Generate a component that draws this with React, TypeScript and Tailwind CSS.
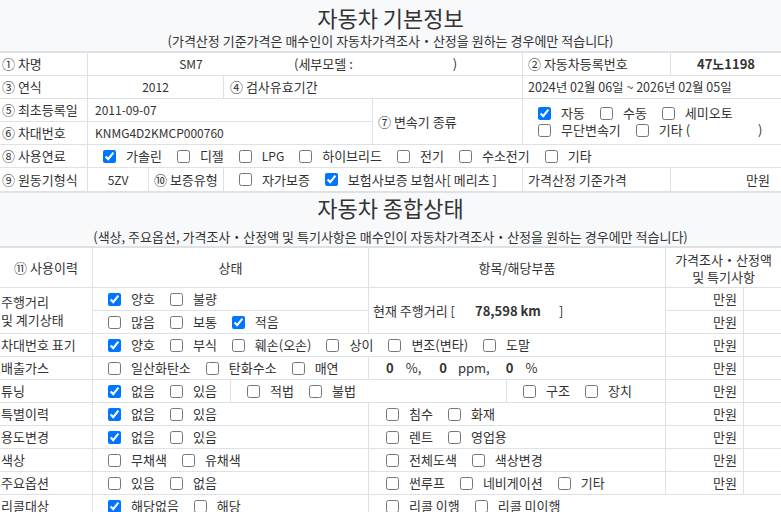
import React from 'react';

const Chk = ({ label, on }: { label: React.ReactNode; on?: boolean }) => (
  <span className="inline-flex items-center gap-[10px] mr-[15px] whitespace-nowrap">
    <input type="checkbox" defaultChecked={on} className="m-0 w-[13px] h-[13px] shrink-0" />
    <span>{label}</span>
  </span>
);

// 영문/숫자는 조금 작게
const L = ({ children }: { children: React.ReactNode }) => <span className="text-[12px]">{children}</span>;

const Row = ({ children, className = '' }: { children: React.ReactNode; className?: string }) => (
  <div className={`flex h-[23px] border-b border-[#dee2e6] ${className}`}>{children}</div>
);

const Cell = ({ children, className = '' }: { children?: React.ReactNode; className?: string }) => (
  <div className={`flex items-center h-full border-r border-[#dee2e6] whitespace-nowrap overflow-hidden ${className}`}>
    {children}
  </div>
);

const Won = () => (
  <>
    <Cell className="w-[78px] justify-end pr-[6px]">만원</Cell>
    <div className="flex-1 h-full" />
  </>
);

export default function App() {
  return (
    <div className="w-[781px] bg-white text-[13px] text-[#333] font-['Noto_Sans_CJK_KR','Liberation_Sans',sans-serif]">
      {/* 기본정보 */}
      <div className="h-[53px] bg-[#f8f9fa] border-b-2 border-[#dee2e6] flex flex-col items-center">
        <div className="text-[22px] leading-[28px] mt-[3px]">자동차 기본정보</div>
        <div className="leading-[16px] mt-[2px]">(가격산정 기준가격은 매수인이 자동차가격조사・산정을 원하는 경우에만 적습니다)</div>
      </div>

      <Row>
        <Cell className="w-[88px] pl-[2px]">① 차명</Cell>
        <Cell className="w-[435px]">
          <span className="w-[206px] text-center"><L>SM7</L></span>
          <span>(세부모델 :</span>
          <span className="ml-[100px]">)</span>
        </Cell>
        <Cell className="w-[148px] pl-[5px]">② 자동차등록번호</Cell>
        <div className="flex-1 flex items-center justify-center font-bold">47노1198</div>
      </Row>
      <Row>
        <Cell className="w-[88px] pl-[2px]">③ 연식</Cell>
        <Cell className="w-[136px] justify-center"><L>2012</L></Cell>
        <Cell className="w-[299px] pl-[6px]">④ 검사유효기간</Cell>
        <div className="flex-1 flex items-center pl-[5px] text-[12.5px]">2024년 02월 06일 ~ 2026년 02월 05일</div>
      </Row>
      <div className="flex h-[46px] border-b border-[#dee2e6]">
        <div className="flex flex-col w-[373px]">
          <div className="flex h-[23px] border-b border-[#dee2e6]">
            <Cell className="w-[88px] pl-[2px]">⑤ 최초등록일</Cell>
            <Cell className="flex-1 pl-[7px]"><L>2011-09-07</L></Cell>
          </div>
          <div className="flex flex-1">
            <Cell className="w-[88px] pl-[2px]">⑥ 차대번호</Cell>
            <Cell className="flex-1 pl-[7px]"><L>KNMG4D2KMCP000760</L></Cell>
          </div>
        </div>
        <Cell className="w-[150px] pl-[5px]">⑦ 변속기 종류</Cell>
        <div className="flex-1 flex flex-col justify-center pl-[15px]">
          <div className="flex items-center h-[17px]">
            <Chk label="자동" on />
            <Chk label="수동" />
            <Chk label="세미오토" />
          </div>
          <div className="flex items-center h-[17px]">
            <Chk label="무단변속기" />
            <span className="inline-flex items-center gap-[10px] whitespace-nowrap">
              <input type="checkbox" className="m-0 w-[13px] h-[13px]" />
              <span>기타 (</span>
              <span className="ml-[58px]">)</span>
            </span>
          </div>
        </div>
      </div>
      <Row>
        <Cell className="w-[88px] pl-[2px]">⑧ 사용연료</Cell>
        <div className="flex-1 flex items-center pl-[15px]">
          <Chk label="가솔린" on />
          <Chk label="디젤" />
          <Chk label={<L>LPG</L>} />
          <Chk label="하이브리드" />
          <Chk label="전기" />
          <Chk label="수소전기" />
          <Chk label="기타" />
        </div>
      </Row>
      <div className="flex h-[23px]">
        <Cell className="w-[88px] pl-[2px]">⑨ 원동기형식</Cell>
        <Cell className="w-[61px] justify-center"><L>5ZV</L></Cell>
        <Cell className="w-[75px] pl-[5px]">⑩ 보증유형</Cell>
        <Cell className="w-[299px] pl-[15px]">
          <Chk label="자가보증" />
          <span className="inline-flex items-center gap-[10px] whitespace-nowrap">
            <input type="checkbox" defaultChecked className="m-0 w-[13px] h-[13px]" />
            <span>보험사보증 보험사[ 메리츠 ]</span>
          </span>
        </Cell>
        <Cell className="w-[148px] pl-[5px]">가격산정 기준가격</Cell>
        <div className="flex-1 flex items-center justify-end pr-[11px]">만원</div>
      </div>

      {/* 종합상태 */}
      <div className="h-[57px] bg-[#f8f9fa] border-y-2 border-[#dee2e6] flex flex-col items-center">
        <div className="text-[22px] leading-[29px]">자동차 종합상태</div>
        <div className="leading-[16px] mt-[7px]">(색상, 주요옵션, 가격조사・산정액 및 특기사항은 매수인이 자동차가격조사・산정을 원하는 경우에만 적습니다)</div>
      </div>

      <div className="flex h-[40px] border-b border-[#dee2e6]">
        <Cell className="w-[93px] justify-center">⑪ 사용이력</Cell>
        <Cell className="w-[276px] justify-center">상태</Cell>
        <Cell className="w-[297px] justify-center">항목/해당부품</Cell>
        <div className="flex-1 flex flex-col items-center justify-center text-center">
          <div className="h-[17px] leading-[17px]">가격조사・산정액</div>
          <div className="h-[17px] leading-[17px]">및 특기사항</div>
        </div>
      </div>

      <div className="flex h-[46px] border-b border-[#dee2e6]">
        <Cell className="w-[93px] pl-[1px]">
          <div className="leading-[18px]">
            <div>주행거리</div>
            <div>및 계기상태</div>
          </div>
        </Cell>
        <div className="w-[276px] flex flex-col border-r border-[#dee2e6]">
          <div className="h-[23px] flex items-center pl-[15px] border-b border-[#dee2e6]">
            <Chk label="양호" on />
            <Chk label="불량" />
          </div>
          <div className="flex-1 flex items-center pl-[15px]">
            <Chk label="많음" />
            <Chk label="보통" />
            <Chk label="적음" on />
          </div>
        </div>
        <Cell className="w-[297px] pl-[4px]">
          <span>현재 주행거리 [</span>
          <span className="ml-[20px] font-bold">78,598 km</span>
          <span className="ml-[18px]">]</span>
        </Cell>
        <div className="flex-1 flex flex-col">
          <div className="h-[23px] flex border-b border-[#dee2e6]">
            <Won />
          </div>
          <div className="flex-1 flex">
            <Won />
          </div>
        </div>
      </div>

      <Row>
        <Cell className="w-[93px] pl-[1px]">차대번호 표기</Cell>
        <Cell className="w-[573px] pl-[15px]">
          <Chk label="양호" on />
          <Chk label="부식" />
          <Chk label="훼손(오손)" />
          <Chk label="상이" />
          <Chk label="변조(변타)" />
          <Chk label="도말" />
        </Cell>
        <Won />
      </Row>
      <Row>
        <Cell className="w-[93px] pl-[1px]">배출가스</Cell>
        <Cell className="w-[276px] pl-[15px]">
          <Chk label="일산화탄소" />
          <Chk label="탄화수소" />
          <Chk label="매연" />
        </Cell>
        <Cell className="w-[297px] pl-[17px]">
          <span className="font-bold">0</span>
          <span className="ml-[12px]">%,</span>
          <span className="ml-[18px] font-bold">0</span>
          <span className="ml-[11px]">ppm,</span>
          <span className="ml-[16px] font-bold">0</span>
          <span className="ml-[12px]">%</span>
        </Cell>
        <Won />
      </Row>
      <Row>
        <Cell className="w-[93px] pl-[1px]">튜닝</Cell>
        <Cell className="w-[138px] pl-[15px]">
          <Chk label="없음" on />
          <Chk label="있음" />
        </Cell>
        <Cell className="w-[276px] pl-[16px]">
          <Chk label="적법" />
          <Chk label="불법" />
        </Cell>
        <Cell className="w-[159px] pl-[16px]">
          <Chk label="구조" />
          <Chk label="장치" />
        </Cell>
        <Won />
      </Row>
      <Row>
        <Cell className="w-[93px] pl-[1px]">특별이력</Cell>
        <Cell className="w-[276px] pl-[15px]">
          <Chk label="없음" on />
          <Chk label="있음" />
        </Cell>
        <Cell className="w-[297px] pl-[17px]">
          <Chk label="침수" />
          <Chk label="화재" />
        </Cell>
        <Won />
      </Row>
      <Row>
        <Cell className="w-[93px] pl-[1px]">용도변경</Cell>
        <Cell className="w-[276px] pl-[15px]">
          <Chk label="없음" on />
          <Chk label="있음" />
        </Cell>
        <Cell className="w-[297px] pl-[17px]">
          <Chk label="렌트" />
          <Chk label="영업용" />
        </Cell>
        <Won />
      </Row>
      <Row>
        <Cell className="w-[93px] pl-[1px]">색상</Cell>
        <Cell className="w-[276px] pl-[15px]">
          <Chk label="무채색" />
          <Chk label="유채색" />
        </Cell>
        <Cell className="w-[297px] pl-[17px]">
          <Chk label="전체도색" />
          <Chk label="색상변경" />
        </Cell>
        <Won />
      </Row>
      <Row>
        <Cell className="w-[93px] pl-[1px]">주요옵션</Cell>
        <Cell className="w-[276px] pl-[15px]">
          <Chk label="있음" />
          <Chk label="없음" />
        </Cell>
        <Cell className="w-[297px] pl-[17px]">
          <Chk label="썬루프" />
          <Chk label="네비게이션" />
          <Chk label="기타" />
        </Cell>
        <Won />
      </Row>
      <Row>
        <Cell className="w-[93px] pl-[1px]">리콜대상</Cell>
        <Cell className="w-[276px] pl-[15px]">
          <Chk label="해당없음" on />
          <Chk label="해당" />
        </Cell>
        <div className="flex-1 flex items-center pl-[17px]">
          <Chk label="리콜 이행" />
          <Chk label="리콜 미이행" />
        </div>
      </Row>
    </div>
  );
}
